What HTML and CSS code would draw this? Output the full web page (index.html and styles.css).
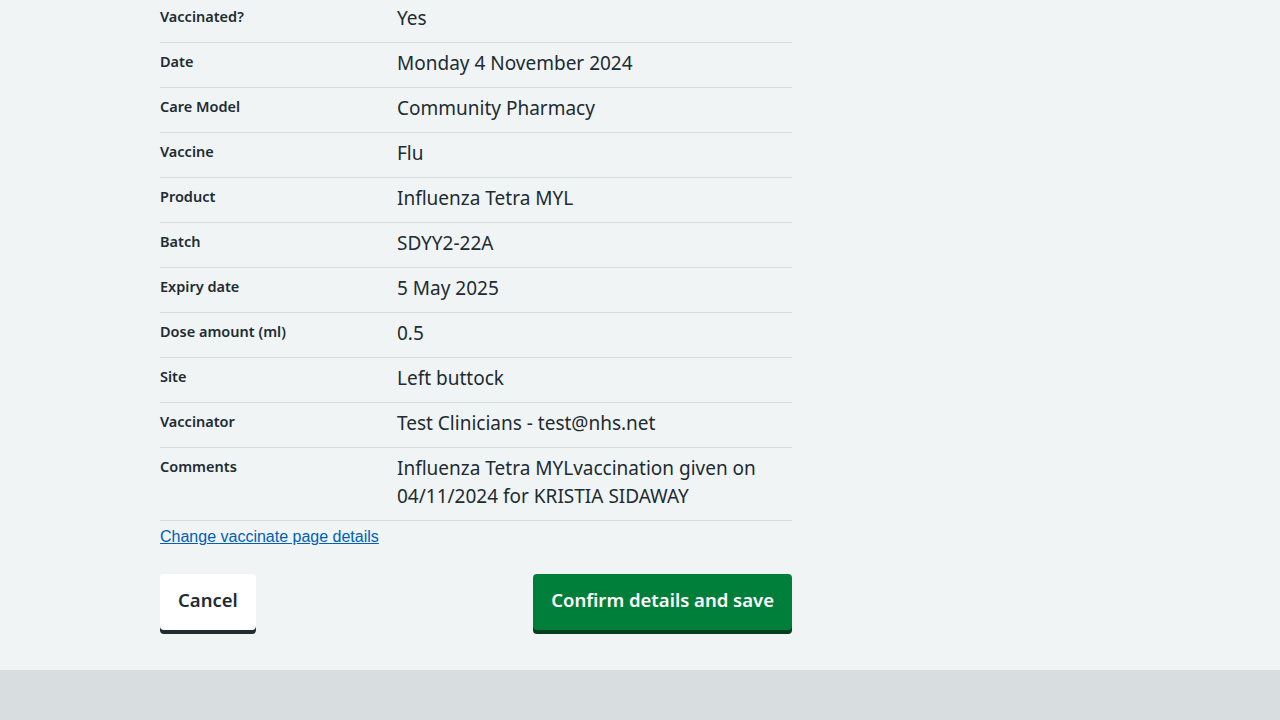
FILE: index.html
```html
<!DOCTYPE html>
<html lang="en">
<head>
<meta charset="utf-8">
<title>Check and confirm</title>
<link rel="stylesheet" href="styles.css">
</head>
<body>
<main class="main">
  <div class="container">
    <dl class="summary">
      <div class="row"><dt class="key">Vaccinated?</dt><dd class="value">Yes</dd></div>
      <div class="row"><dt class="key">Date</dt><dd class="value">Monday 4 November 2024</dd></div>
      <div class="row"><dt class="key">Care Model</dt><dd class="value">Community Pharmacy</dd></div>
      <div class="row"><dt class="key">Vaccine</dt><dd class="value">Flu</dd></div>
      <div class="row"><dt class="key">Product</dt><dd class="value">Influenza Tetra MYL</dd></div>
      <div class="row"><dt class="key">Batch</dt><dd class="value">SDYY2-22A</dd></div>
      <div class="row"><dt class="key">Expiry date</dt><dd class="value">5 May 2025</dd></div>
      <div class="row"><dt class="key">Dose amount (ml)</dt><dd class="value">0.5</dd></div>
      <div class="row"><dt class="key">Site</dt><dd class="value">Left buttock</dd></div>
      <div class="row"><dt class="key">Vaccinator</dt><dd class="value">Test Clinicians - test@nhs.net</dd></div>
      <div class="row"><dt class="key">Comments</dt><dd class="value">Influenza Tetra MYLvaccination given on 04/11/2024 for KRISTIA SIDAWAY</dd></div>
    </dl>
    <a class="change-link" href="#">Change vaccinate page details</a>
    <div class="actions">
      <button class="btn btn-secondary" type="button">Cancel</button>
      <button class="btn btn-primary" type="button">Confirm details and save</button>
    </div>
  </div>
</main>
<footer class="footer"></footer>
</body>
</html>
```
FILE: styles.css
```css
html, body {
  margin: 0;
  padding: 0;
}
body {
  background: #f0f4f5;
  color: #212b32;
  font-family: "Noto Sans", "Open Sans", sans-serif;
  height: 720px;
  overflow: hidden;
}
.main {
  background: #f0f4f5;
  padding-bottom: 36px;
}
.container {
  width: 632px;
  margin-left: 160px;
}
.summary {
  margin: -2px 0 0 0;
  padding: 0;
}
.row {
  display: grid;
  grid-template-columns: 237px 1fr;
  border-bottom: 1px solid #d8dde0;
}
.key {
  margin: 0;
  padding: 6px 16px 10px 0;
  font-size: 14.5px;
  font-weight: 600;
  line-height: 24px;
}
.value {
  margin: 0;
  padding: 6px 0 10px;
  font-size: 19px;
  line-height: 28px;
}
.change-link {
  display: inline-block;
  margin-top: 7px;
  font-family: "Liberation Sans", Arial, sans-serif;
  font-size: 16px;
  line-height: 18px;
  color: #005eb8;
  text-decoration: underline;
}
.actions {
  display: flex;
  justify-content: space-between;
  align-items: flex-start;
  margin-top: 27px;
}
.btn {
  font-family: "Noto Sans", "Open Sans", sans-serif;
  font-size: 18.5px;
  font-weight: 600;
  line-height: 28px;
  padding: 10px 16px 14px;
  border: 2px solid transparent;
  border-radius: 4px;
  cursor: pointer;
  margin-bottom: 4px;
}
.btn-secondary {
  background: #ffffff;
  color: #212b32;
  box-shadow: 0 4px 0 #212b32;
}
.btn-primary {
  background: #007f3b;
  color: #ffffff;
  box-shadow: 0 4px 0 #00401e;
}
.footer {
  background: #d8dde0;
  height: 50px;
}
```
